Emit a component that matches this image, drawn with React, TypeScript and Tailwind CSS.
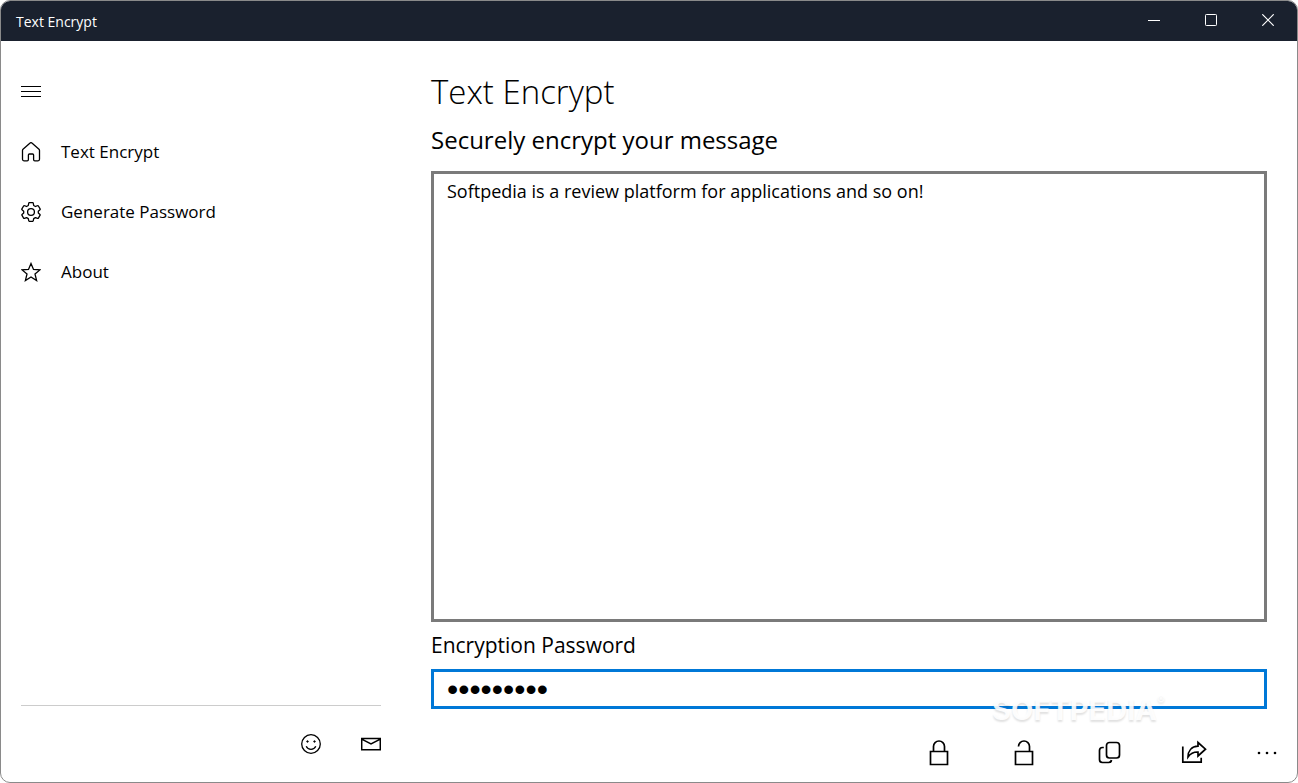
import React from "react";

type IconProps = { children: React.ReactNode; w: number; h: number; stroke?: number };

function Icon({ children, w, h, stroke = 1.3 }: IconProps) {
  return (
    <svg
      width={w}
      height={h}
      viewBox={`0 0 ${w} ${h}`}
      fill="none"
      stroke="currentColor"
      strokeWidth={stroke}
      aria-hidden="true"
      className="shrink-0"
    >
      {children}
    </svg>
  );
}

const HomeIcon = () => (
  <Icon w={20} h={20}>
    <path
      strokeLinejoin="round"
      d="M9.1 1.1 2 7.3c-.3.3-.5.7-.5 1.1v8.9c0 .9.6 1.5 1.5 1.5h3.2c.7 0 1.200-.5 1.200-1.200V13c0-.6.4-1 1-1h3.200c.6 0 1 .4 1 1v4.600c0 .7.5 1.200 1.200 1.200H17c.9 0 1.500-.6 1.500-1.500V8.400c0-.4-.2-.8-.5-1.100L10.900 1.100c-.5-.5-1.300-.5-1.800 0z"
    />
  </Icon>
);

const GearIcon = () => (
  <Icon w={20} h={20}>
    <path
      strokeLinejoin="round"
      d="M8.300.7h3.400q.5 0 .6.6l.4 2.200 1.700 1 2.200-.8q.5-.2.8.3l1.700 2.900q.3.500-.1.800L17.300 9.200v1.700l1.700 1.500q.4.300.1.800l-1.700 2.900q-.3.500-.8.300l-2.200-.8-1.700 1-.4 2.100q-.1.600-.6.600H8.300q-.5 0-.6-.6l-.4-2.100-1.700-1-2.200.8q-.5.200-.8-.3L.9 13.200q-.3-.5.1-.8l1.700-1.500V9.200L1 7.700q-.4-.3-.1-.8L2.600 4q.3-.5.8-.3l2.200.8 1.700-1 .4-2.200q.1-.6.600-.6z"
    />
    <circle cx="10" cy="10" r="3.400" />
  </Icon>
);

const StarIcon = () => (
  <Icon w={20} h={20}>
    <path d="M10 1.500 12.500 7.400 18.900 7.900 14 12 15.600 18.500 10 15 4.400 18.500 6 12 1.100 7.900 7.500 7.400z" />
  </Icon>
);

const navItems = [
  { label: "Text Encrypt", icon: <HomeIcon /> },
  { label: "Generate Password", icon: <GearIcon /> },
  { label: "About", icon: <StarIcon /> },
];

const commands = [
  {
    label: "Encrypt",
    icon: (
      <Icon w={26} h={28} stroke={1.700}>
        <path d="M4.500 12.500h17v13h-17zM7.500 12V7.500a5.500 5.500 0 0 1 11 0V12" />
      </Icon>
    ),
  },
  {
    label: "Decrypt",
    icon: (
      <Icon w={26} h={28} stroke={1.700}>
        <path d="M4.500 12.500h17v13h-17zM7.500 7.500a5.500 5.500 0 0 1 11 0V12" />
      </Icon>
    ),
  },
  {
    label: "Copy",
    icon: (
      <Icon w={26} h={28} stroke={1.700}>
        <rect x="10.500" y="3.500" width="13" height="15.500" rx="3" />
        <path d="M7.800 8.500H6.500a3 3 0 0 0-3 3v9a3 3 0 0 0 3 3h6a3 3 0 0 0 3-2.500" />
      </Icon>
    ),
  },
  {
    label: "Share",
    icon: (
      <Icon w={26} h={28} stroke={1.700}>
        <path d="M1.800 7.500v15.700h18.400v-4.500" />
        <path d="M17 3.500 24.500 10.200 17 17v-4c-4.500-.2-7.500 1.500-10 5C7 12 10.500 7.500 17 7.200z" />
      </Icon>
    ),
  },
];

export default function App() {
  return (
    <div className="bg-white font-['Open_Sans','Noto_Sans',sans-serif] text-black">
      <div className="relative flex h-screen min-h-[480px] flex-col overflow-hidden rounded-[10px] border border-[#8a8a8a] bg-white">
        <header className="flex h-10 shrink-0 items-center justify-between bg-[#1a212e] pr-px text-white">
          <span className="pl-[15px] text-[14px]">Text Encrypt</span>
          <div className="flex h-full">
            <button type="button" aria-label="Minimize" className="flex w-[57px] items-center justify-center pb-[2px]">
              <Icon w={12} h={12} stroke={1}>
                <path d="M0 6.500h12" />
              </Icon>
            </button>
            <button type="button" aria-label="Maximize" className="flex w-[57px] items-center justify-center pb-[2px]">
              <Icon w={12} h={12} stroke={1}>
                <rect x=".5" y=".5" width="11" height="11" rx=".8" />
              </Icon>
            </button>
            <button type="button" aria-label="Close" className="flex w-[57px] items-center justify-center pb-[2px]">
              <Icon w={12} h={12} stroke={1.200}>
                <path d="M.3.3l11.400 11.400M11.700.3.3 11.700" />
              </Icon>
            </button>
          </div>
        </header>

        <div className="flex min-h-0 flex-1">
          <aside className="flex w-[400px] shrink-0 flex-col px-5 pt-[21px]">
            <button type="button" aria-label="Toggle navigation" className="flex h-[60px] items-center">
              <Icon w={20} h={12} stroke={1}>
                <path d="M0 .5h20M0 5.500h20M0 10.500h20" />
              </Icon>
            </button>
            <nav className="flex flex-col">
              {navItems.map((item) => (
                <a key={item.label} href="#" className="flex h-[60px] items-center gap-5 text-[17px]">
                  {item.icon}
                  {item.label}
                </a>
              ))}
            </nav>
            <div className="mt-auto flex h-[77px] justify-end gap-10 border-t border-[#cccccc]">
              <button type="button" aria-label="Feedback">
                <Icon w={20} h={20}>
                  <circle cx="10" cy="10" r="9.300" />
                  <path d="M5.200 12.300a5.300 5.300 0 0 0 9.600 0" />
                  <circle cx="6.500" cy="7.500" r=".8" fill="currentColor" strokeWidth=".8" />
                  <circle cx="13.500" cy="7.500" r=".8" fill="currentColor" strokeWidth=".8" />
                </Icon>
              </button>
              <button type="button" aria-label="Mail">
                <Icon w={20} h={20} stroke={1.500}>
                  <path d="M.7 4.500h18.600v11.300H.7zM.7 5.200 10 10l9.300-4.800" />
                </Icon>
              </button>
            </div>
          </aside>

          <main className="flex min-w-0 flex-1 flex-col">
            <div className="flex min-h-0 flex-1 flex-col px-[30px]">
              <h1 className="mt-[26px] text-[33px] leading-[50px] font-light">Text Encrypt</h1>
              <label htmlFor="message" className="text-[24px] leading-[46px]">
                Securely encrypt your message
              </label>
              <textarea
                id="message"
                defaultValue="Softpedia is a review platform for applications and so on!"
                spellCheck={false}
                className="mt-2 min-h-0 flex-1 resize-none border-[3px] border-[#7a7a7a] bg-white px-[13px] py-[5px] text-[18px] leading-6 outline-none"
              />
              <label htmlFor="password" className="text-[21px] leading-[47px]">
                Encryption Password
              </label>
              <input
                id="password"
                type="password"
                defaultValue="encrypted"
                className="h-10 shrink-0 border-[3px] border-[#0078d7] bg-white px-[13px] font-['Liberation_Sans',sans-serif] text-[32px] leading-[34px] outline-none"
              />
            </div>
            <div className="mt-[13px] flex h-[60px] shrink-0 justify-end pt-[2px]">
              {commands.map((c) => (
                <button key={c.label} type="button" aria-label={c.label} className="flex w-[85px] items-center justify-center">
                  {c.icon}
                </button>
              ))}
              <button type="button" aria-label="More" className="flex w-[61px] items-center justify-center">
                <svg width="20" height="4" viewBox="0 0 20 4" fill="currentColor" aria-hidden="true">
                  <circle cx="2" cy="2" r="1.300" />
                  <circle cx="10" cy="2" r="1.300" />
                  <circle cx="18" cy="2" r="1.300" />
                </svg>
              </button>
            </div>
          </main>
        </div>

        <div className="pointer-events-none absolute right-[132px] bottom-[54px] flex items-start font-['Inter',sans-serif] text-white/90 [text-shadow:0_2px_2px_rgb(0_0_0/0.12)]">
          <span className="text-[29px] leading-9 font-bold">SOFTPEDIA</span>
          <span className="text-[12px] leading-4">®</span>
        </div>
      </div>
    </div>
  );
}
